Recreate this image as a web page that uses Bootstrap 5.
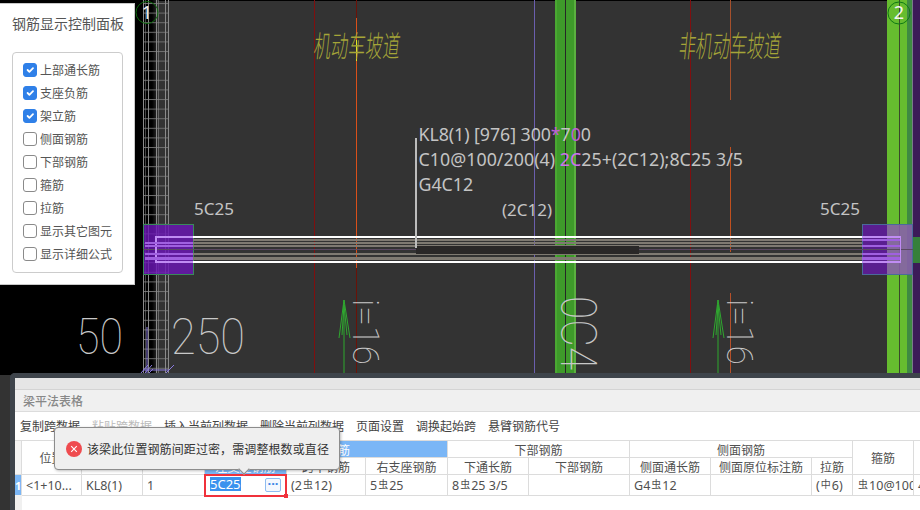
<!DOCTYPE html>
<html lang="zh">
<head>
<meta charset="utf-8">
<title>钢筋显示控制面板</title>
<link href="https://cdn.jsdelivr.net/npm/bootstrap@5.3.0/dist/css/bootstrap.min.css" rel="stylesheet">
<style>
html,body{margin:0;background:#333}
body{font-family:"Noto Sans","Noto Sans CJK SC",sans-serif;font-size:12px;color:#444}
.stage{position:relative;width:920px;height:510px;overflow:hidden;background:#333}
.cad{display:block;width:920px;height:375px;margin-bottom:-2px}
.cad-label{font-family:"Noto Sans",sans-serif;fill:#c4c4c4}
.cad-cn{font-family:"Noto Sans CJK SC",sans-serif;font-weight:300;font-size:17px;fill:#a5a538}
.cad-thin{font-family:Roboto,sans-serif;font-weight:100;fill:#c8c8c8}
.ctl-panel{position:absolute;left:0;top:3px;width:135px;height:282px;background:#fff;border:1px solid #c8c8c8;border-left:0;padding:9px 0 0 12px}
.ctl-title{font-size:14px;line-height:20px;color:#555;white-space:nowrap;margin-bottom:19px;font-family:"Noto Sans CJK SC",sans-serif}
.ctl-box{border:1px solid #ccc;border-radius:4px;width:111px;height:221px;padding:8px 0 0 10px;display:flex;flex-direction:column;gap:5px}
.ctl-row{display:flex;align-items:center;gap:3px;height:18px;min-height:0;padding:0;margin:0}
.ctl-row .form-check-input{float:none;margin:0;width:14px;height:14px;border:1px solid #8a8a8a;border-radius:3px;flex:none}
.ctl-row .form-check-input:checked{background-color:#2f80e8;border-color:#2f80e8}
.ctl-row .form-check-label{font-size:12px;line-height:18px;color:#555;font-family:"Noto Sans CJK SC",sans-serif}
.win{width:915px;height:137px;margin-left:10px;background:#f0f0f0;border:5px solid #3e444b;border-width:5px 0 0 5px;border-top-left-radius:5px;position:relative}
.win-cap{height:12px;background:#e6e6e6;border-bottom:1px solid #d4d4d4}
.win-title{height:22px;background:#f0f0f0;border-bottom:1px solid #dcdcdc;padding-left:8px;line-height:21px;font-weight:500;color:#888;font-family:"Noto Sans CJK SC",sans-serif}
.win-tools{height:28px;background:#fff;display:flex;gap:12px;padding-left:5px;align-items:center;font-family:"Noto Sans CJK SC",sans-serif;color:#444}
.win-tools .off{color:#bbb}
.sheet-wrap{background:#fff;height:70px;overflow:hidden;position:relative}
.sheet-strip{position:absolute;left:0;top:55px;bottom:0;width:7px;background:#f0f0f0}
table.sheet{table-layout:fixed;width:958px;margin:0 0 0 -1px;border-collapse:collapse;color:#444;--bs-table-bg:transparent}
table.sheet th,table.sheet td{border:1px solid #dcdcdc;padding:0;font-weight:400;text-align:center;font-size:12px;line-height:15px;white-space:nowrap;overflow:hidden;font-family:"Noto Sans CJK SC",sans-serif;vertical-align:middle;color:#505050}
table.sheet tr.hd1 th{height:17px}
table.sheet tr.hd2 th{height:17px}
table.sheet tr.dat td{height:21px;text-align:left;padding-left:4px;font-family:"Noto Sans","Noto Sans CJK SC",sans-serif;font-size:12.5px}
table.sheet th.sel{background:#7ab6f6;color:#fff}
table.sheet tr.dat td.rn{background:#7ab6f6;color:#fff;font-weight:700;padding:0;text-align:center;font-size:11px}
table.sheet th.rn0{background:#f4f4f4}
.rb{font-family:"Noto Sans CJK SC",sans-serif;font-size:10px;position:relative;top:-2px;margin:0 1px}
table.sheet tr.dat td.edit{position:relative;overflow:visible;padding-left:5px}
.edit-frame{position:absolute;left:-1px;top:-1px;right:-1px;bottom:-2px;border:2px solid #f0313b;pointer-events:none}
.edit-frame::after{content:"";position:absolute;right:-3px;bottom:-3px;width:4px;height:4px;background:#f0313b}
.edit-txt{background:#3a92ee;color:#fff;display:inline-block;line-height:14px;position:relative;top:-1px;font-size:13px}
.edit-btn{position:absolute;right:5px;top:3px;width:16px;height:14px;border:1px solid #8fbcf0;border-radius:2px;background:#f3f8fe;color:#3a86e6;font-size:13px;line-height:9px;text-align:center;font-weight:700;letter-spacing:0}
.tip{position:absolute;left:54px;top:427px;width:286px;height:43px;background:#efefef;border:1px solid #8c8c8c;border-radius:4px;display:flex;align-items:center;gap:5px;padding-left:11px;box-shadow:1px 1px 3px rgba(0,0,0,.25);font-size:12px;letter-spacing:.1px;color:#333;font-family:"Noto Sans CJK SC",sans-serif}
.tip::after{content:"";position:absolute;left:185px;top:37px;width:8px;height:8px;background:#efefef;border:1px solid #8c8c8c;border-width:0 1px 1px 0;transform:rotate(45deg)}
.tip-ico{flex:none;display:block}
</style>
</head>
<body>
<div class="stage">
  <svg class="cad" viewBox="0 0 920 375" xmlns="http://www.w3.org/2000/svg">
    <defs>
      <linearGradient id="fade" x1="0" x2="1" y1="0" y2="0"><stop offset="0" stop-color="#000"/><stop offset=".55" stop-color="#000"/><stop offset="1" stop-color="#333"/></linearGradient>
      <pattern id="gridrows" width="25" height="9.6" patternUnits="userSpaceOnUse" x="143" y="3"><rect width="25" height="1" fill="#6e6e6e"/></pattern>
    </defs>
    <rect width="920" height="375" fill="#333"/>
    <rect x="0" y="0" width="920" height="1" fill="#000"/>
    <rect x="0" y="0" width="145" height="375" fill="#000"/>
    <rect x="145" y="0" width="13" height="375" fill="url(#fade)"/>
    <rect x="143" y="0" width="25" height="375" fill="url(#gridrows)"/>
    <g fill="#8a8a8a">
      <rect x="143" width="1" height="375"/><rect x="145" width="1" height="375" opacity=".5"/><rect x="148" width="1" height="375"/>
      <rect x="156" width="1" height="375"/><rect x="158" width="1" height="375" opacity=".6"/>
      <rect x="165" width="1" height="375"/><rect x="168" width="1" height="375"/>
    </g>
    <!-- axis lines -->
    <rect x="314" width="1" height="375" fill="#7f0f0f"/>
    <rect x="356" width="1" height="375" fill="#6a1208"/>
    <rect x="356" y="18" width="1" height="250" fill="#d9501a"/>
    <rect x="356" y="40" width="1" height="21" fill="#e8e820"/>
    <rect x="534" width="1" height="375" fill="#6b5fae"/>
    <rect x="690" width="1" height="375" fill="#7f0f0f"/>
    <rect x="730" width="1" height="100" fill="#a5502c"/>
    <rect x="730" y="147" width="1" height="105" fill="#c0501f"/>
    <rect x="730" y="293" width="1" height="82" fill="#b5502a"/>
    <!-- green columns -->
    <rect x="555" width="21" height="375" fill="#3e9a2a"/>
    <rect x="555" width="2" height="375" fill="#4aa832"/><rect x="574" width="2" height="375" fill="#5bb040"/>
    <rect x="565" width="1" height="375" fill="#262626"/>
    <rect x="887" width="26" height="375" fill="#66bd2f"/>
    <rect x="907" width="6" height="375" fill="#3e8a42"/>
    <rect x="899" width="1" height="375" fill="#3a4a2a"/>
    <rect x="913" width="7" height="375" fill="#3c1a58"/>
    <rect x="912" width="1" height="375" fill="#7a7a8a"/>
    <rect x="913" y="237" width="7" height="26" fill="#36803a"/>
    <!-- support blocks -->
    <rect x="143.500" y="224.500" width="50" height="50" fill="#6a16b4" fill-opacity=".82" stroke="#3a8a5a"/>
    <rect x="862.500" y="224.500" width="50" height="50" fill="#6a16b4" fill-opacity=".72" stroke="#4a6a9a"/>
    <rect x="887" y="225" width="25" height="49" fill="#9a88a8" fill-opacity=".55"/>
    <!-- beam -->
    <g fill="#7f7a72">
      <rect x="193" y="239" width="669" height="2"/><rect x="193" y="242" width="669" height="2"/>
      <rect x="193" y="245" width="669" height="2"/><rect x="193" y="253" width="669" height="2"/>
      <rect x="193" y="257" width="669" height="3"/>
    </g>
    <rect x="143" y="249" width="770" height="1" fill="#5a4a62"/>
    <rect x="416" y="246" width="223" height="8" fill="#2a2828"/>
    <rect x="555" y="249" width="21" height="1" fill="#1e2a1a"/>
    <rect x="193" y="236" width="669" height="2" fill="#fff"/>
    <rect x="193" y="261" width="669" height="2" fill="#fff"/>
    <g fill="#c08cf4">
      <rect x="155" y="236" width="38" height="2"/><rect x="155" y="261" width="38" height="2"/><rect x="155" y="236" width="2" height="27"/>
      <rect x="862" y="236" width="39" height="2"/><rect x="862" y="261" width="39" height="2"/><rect x="900" y="236" width="1" height="27"/>
    </g>
    <g fill="#a060e0">
      <rect x="145" y="242" width="48" height="2"/><rect x="145" y="245" width="48" height="2"/><rect x="145" y="253" width="48" height="2"/><rect x="145" y="257" width="48" height="3"/>
      <rect x="862" y="239" width="38" height="2"/><rect x="862" y="245" width="38" height="2"/><rect x="862" y="253" width="38" height="2"/><rect x="862" y="257" width="38" height="3"/>
    </g>
    <rect x="415" y="138" width="2" height="110" fill="#bcbcbc"/>
    <!-- axis bubbles -->
    <circle cx="147" cy="12.500" r="11" fill="none" stroke="#0c6a0c"/>
    <circle cx="899" cy="13" r="11" fill="none" stroke="#0f7a14"/>
    <text x="147" y="19" text-anchor="middle" font-size="18" fill="#f0f0f0" font-family="Noto Sans">1</text>
    <text x="899" y="19" text-anchor="middle" font-size="18" fill="#f4f4f4" font-family="Noto Sans">2</text>
    <!-- ramp names -->
    <text class="cad-cn" transform="translate(313 57) skewX(-6) scale(1 1.75)" textLength="86">机动车坡道</text>
    <text class="cad-cn" transform="translate(678 57) skewX(-6) scale(1 1.75)" textLength="102">非机动车坡道</text>
    <!-- annotation -->
    <g font-size="17.800">
      <text class="cad-label" x="418.500" y="141" textLength="172.500">KL8(1) [976] 300<tspan fill="#c060d8">*</tspan>7<tspan fill="#c060d8">0</tspan>0</text>
      <text class="cad-label" x="418.500" y="166" textLength="324.500">C10@100/200(4) <tspan fill="#d070f0">2C</tspan>25+(2C12);8C25 3/5</text>
      <text class="cad-label" x="418.500" y="191">G4C12</text>
    </g>
    <text class="cad-label" x="194" y="215" font-size="17">5C25</text>
    <text class="cad-label" x="502" y="216" font-size="17">(2C12)</text>
    <text class="cad-label" x="820" y="215" font-size="17">5C25</text>
    <!-- drafting dimensions -->
    <text class="cad-thin" x="76" y="354" font-size="50" textLength="47" lengthAdjust="spacingAndGlyphs">50</text>
    <text class="cad-thin" x="171" y="354" font-size="50" textLength="74" lengthAdjust="spacingAndGlyphs">250</text>
    <text class="cad-thin" transform="translate(353 299) rotate(90)" font-size="36" textLength="66" lengthAdjust="spacingAndGlyphs">i=16</text>
    <text class="cad-thin" transform="translate(727 299) rotate(90)" font-size="36" textLength="66" lengthAdjust="spacingAndGlyphs">i=16</text>
    <text class="cad-thin" transform="translate(561 296) rotate(90)" font-size="50" textLength="74" lengthAdjust="spacingAndGlyphs">0C4</text>
    <!-- green arrows -->
    <g stroke="#2fa82f" fill="none">
      <path d="M344 300V375M344 300L339 338M344 300L350 338M344 305L342 335M344 305L347 335"/>
      <path d="M718 300V375M718 300L713 338M718 300L724 338M718 305L716 335M718 305L721 335"/>
    </g>
    <!-- hatch -->
    <g stroke="#8a7ae0" fill="none">
      <path d="M147 327V373M143 370H168M141 373L148 365M145 373L152 365M149 373L153 369M166 373L174 365"/>
    </g>
  </svg>

  <div class="win">
    <div class="win-cap"></div>
    <div class="win-title">梁平法表格</div>
    <div class="win-tools">
      <span>复制跨数据</span><span class="off">粘贴跨数据</span><span>插入当前列数据</span><span>删除当前列数据</span><span>页面设置</span><span>调换起始跨</span><span>悬臂钢筋代号</span>
    </div>
    <div class="sheet-wrap">
      <div class="sheet-strip"></div>
      <table class="table sheet">
        <colgroup>
          <col style="width:7px"><col style="width:60px"><col style="width:61px"><col style="width:62px"><col style="width:82px"><col style="width:79px"><col style="width:82px"><col style="width:81px"><col style="width:101px"><col style="width:81px"><col style="width:101px"><col style="width:41px"><col style="width:61px"><col style="width:59px">
        </colgroup>
        <thead>
          <tr class="hd1">
            <th rowspan="2" class="rn0"></th><th rowspan="2">位置</th><th rowspan="2">名称</th><th rowspan="2">跨号</th>
            <th colspan="3" class="sel">上部钢筋</th><th colspan="2">下部钢筋</th><th colspan="3">侧面钢筋</th><th rowspan="2">箍筋</th><th rowspan="2"></th>
          </tr>
          <tr class="hd2">
            <th class="sel">左支座钢筋</th><th>跨中钢筋</th><th>右支座钢筋</th><th>下通长筋</th><th>下部钢筋</th><th>侧面通长筋</th><th>侧面原位标注筋</th><th>拉筋</th>
          </tr>
        </thead>
        <tbody>
          <tr class="dat">
            <td class="rn">1</td><td>&lt;1+10...</td><td>KL8(1)</td><td>1</td>
            <td class="edit"><span class="edit-txt">5C25</span><span class="edit-btn">···</span><span class="edit-frame"></span></td>
            <td>(2<span class="rb">虫</span>12)</td><td>5<span class="rb">虫</span>25</td><td>8<span class="rb">虫</span>25 3/5</td><td></td><td>G4<span class="rb">虫</span>12</td><td></td><td>(<span class="rb">中</span>6)</td><td><span class="rb">虫</span>10@100/200(4)</td><td>4</td>
          </tr>
        </tbody>
      </table>
    </div>
  </div>

  <div class="ctl-panel">
    <div class="ctl-title">钢筋显示控制面板</div>
    <div class="ctl-box">
      <div class="form-check ctl-row"><input class="form-check-input" type="checkbox" id="c1" checked><label class="form-check-label" for="c1">上部通长筋</label></div>
      <div class="form-check ctl-row"><input class="form-check-input" type="checkbox" id="c2" checked><label class="form-check-label" for="c2">支座负筋</label></div>
      <div class="form-check ctl-row"><input class="form-check-input" type="checkbox" id="c3" checked><label class="form-check-label" for="c3">架立筋</label></div>
      <div class="form-check ctl-row"><input class="form-check-input" type="checkbox" id="c4"><label class="form-check-label" for="c4">侧面钢筋</label></div>
      <div class="form-check ctl-row"><input class="form-check-input" type="checkbox" id="c5"><label class="form-check-label" for="c5">下部钢筋</label></div>
      <div class="form-check ctl-row"><input class="form-check-input" type="checkbox" id="c6"><label class="form-check-label" for="c6">箍筋</label></div>
      <div class="form-check ctl-row"><input class="form-check-input" type="checkbox" id="c7"><label class="form-check-label" for="c7">拉筋</label></div>
      <div class="form-check ctl-row"><input class="form-check-input" type="checkbox" id="c8"><label class="form-check-label" for="c8">显示其它图元</label></div>
      <div class="form-check ctl-row"><input class="form-check-input" type="checkbox" id="c9"><label class="form-check-label" for="c9">显示详细公式</label></div>
    </div>
  </div>

  <div class="tip" role="alert">
    <svg class="tip-ico" width="16" height="16" viewBox="0 0 16 16"><circle cx="8" cy="8" r="8" fill="#ef4b4f"/><path d="M5.200 5.200L10.800 10.800M10.800 5.200L5.200 10.800" stroke="#fff" stroke-width="1.100"/></svg>
    <span>该梁此位置钢筋间距过密，需调整根数或直径</span>
  </div>
</div>
<script src="https://cdn.jsdelivr.net/npm/bootstrap@5.3.0/dist/js/bootstrap.bundle.min.js"></script>
</body>
</html>
